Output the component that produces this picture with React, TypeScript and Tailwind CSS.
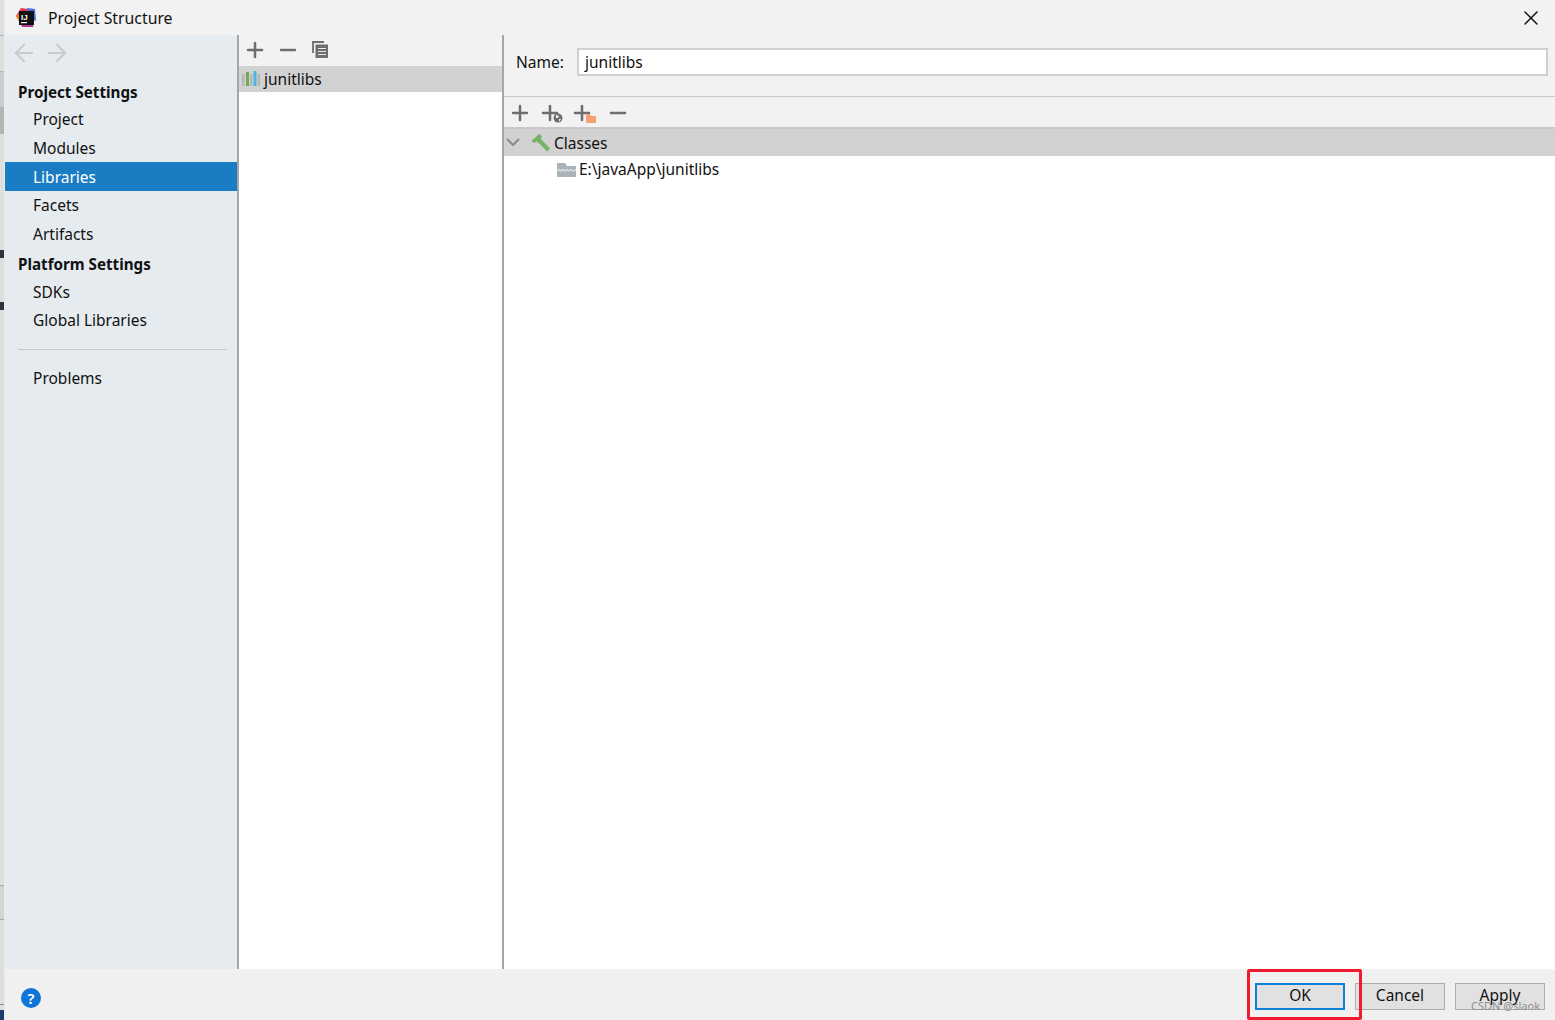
import { ArrowLeft, ArrowRight, Minus, Plus, X } from "lucide-react";

const font = { fontFamily: '"Noto Sans", "Open Sans", sans-serif' };

// what shows of the window behind the dialog, top to bottom
const behind = [
  "h-[35px] bg-[#dedede]",
  "h-px bg-[#b4b4b4]",
  "h-[35px] bg-[#dedede]",
  "h-px bg-[#b4b4b4]",
  "h-[35px] bg-[#c9ccd0]",
  "h-[27px] bg-[#b4b4b4]",
  "h-[116px] bg-[#dedede]",
  "h-[8px] bg-[#2b3440]",
  "h-[44px] bg-[#dedede]",
  "h-[8px] bg-[#2b3440]",
  "h-[575px] bg-[#dedede]",
  "h-px bg-[#a8a8a8]",
  "h-[33px] bg-[#d4d4d4]",
  "h-px bg-[#a8a8a8]",
  "h-[84px] bg-[#dedede]",
  "h-px bg-[#8c8c8c]",
  "h-[5px] bg-[#dedede]",
  "h-[10px] bg-[#1d3a6b]",
];

function IdeaLogo() {
  return (
    <svg width="20" height="19" viewBox="0 0 20 19">
      <path d="M0 8 L5 0 L12 1 L10 12 L3 13 Z" fill="#f0344c" />
      <path d="M0 8 L4 5 L8 16 L4 15 Z" fill="#f97a12" />
      <path d="M11 0 L19 1 L20 13 L12 8 Z" fill="#4b6ee8" />
      <path d="M4 14 L18 14 L17 19 L6 19 Z" fill="#b0369a" />
      <rect x="3" y="3" width="15" height="14" fill="#111" />
      <rect x="5" y="14" width="6" height="1.2" fill="#fff" />
      <text x="5" y="11.5" fontSize="8" fontWeight="700" fill="#fff" fontFamily='"Liberation Sans", sans-serif'>IJ</text>
    </svg>
  );
}

function CopyIcon() {
  return (
    <svg width="16" height="17" viewBox="0 0 16 17" fill="none">
      <path d="M1 12 V1 H12" stroke="#6e6e6e" strokeWidth="1.8" />
      <rect x="3.5" y="3.5" width="12.5" height="13.5" fill="#6e6e6e" />
      <path d="M6 7.5 H14 M6 10.5 H14 M6 13.5 H14" stroke="#e8e8e8" strokeWidth="1.2" />
    </svg>
  );
}

function LibraryBars() {
  return (
    <svg width="18" height="16" viewBox="0 0 18 16">
      <rect x="0" y="3" width="2.5" height="12" fill="#afb8bd" />
      <rect x="4" y="1" width="3" height="14" fill="#74ab4b" />
      <rect x="8" y="3" width="2.5" height="12" fill="#afb8bd" />
      <rect x="11.5" y="0" width="3" height="15" fill="#4db4dc" />
      <rect x="15.5" y="3" width="2.5" height="12" fill="#afb8bd" />
    </svg>
  );
}

function Hammer() {
  return (
    <svg width="20" height="20" viewBox="0 0 20 20">
      <path d="M0.5 8 L8 1 L11 3.5 L9.5 5.5 L11 7.5 L8 10.5 L6 8.5 L3 10 Z" fill="#75b266" />
      <path d="M6.5 8.5 L9.5 5.5 L19 15.5 L16 18.5 Z" fill="#75b266" />
    </svg>
  );
}

function JarFolder() {
  return (
    <svg width="19" height="14" viewBox="0 0 19 14">
      <path d="M0 0 H8 L10 3 H19 V14 H0 Z" fill="#aab3b9" />
      <path d="M0 8 L2 6.5 L4 8 L6 6.5 L8 8 L10 6.5 L12 8 L14 6.5 L16 8 L19 6.5" stroke="#e4e7e9" strokeWidth="1.2" fill="none" />
    </svg>
  );
}

function ToolPlus() {
  return <Plus size={24} strokeWidth={2.5} className="text-[#6e6e6e]" />;
}

function ToolMinus() {
  return <Minus size={24} strokeWidth={2.5} className="text-[#6e6e6e]" />;
}

function AddWithWeb() {
  return (
    <div className="relative h-6 w-[26px]">
      <ToolPlus />
      <svg width="10" height="10" viewBox="0 0 10 10" className="absolute top-[12px] left-[15px]">
        <circle cx="5" cy="5" r="4.5" fill="#6e6e6e" />
        <path d="M3 2 L6 3 L5 5 L3 5 Z M6 6 L8 6 L6 9 Z" fill="#f2f2f2" />
      </svg>
    </div>
  );
}

function AddWithFolder() {
  return (
    <div className="relative h-6 w-[26px]">
      <ToolPlus />
      <svg width="10" height="9" viewBox="0 0 10 9" className="absolute top-[13px] left-[16px]">
        <path d="M0 0 H4 L5 2 H10 V9 H0 Z" fill="#f4a073" />
      </svg>
    </div>
  );
}

function NavItem({ label, height, active }: { label: string; height: string; active?: boolean }) {
  return (
    <div className={`flex items-center pt-[2px] pl-7 ${height} ${active ? "bg-[#1a7dc4] text-white" : "text-[#111]"}`}>
      {label}
    </div>
  );
}

function FooterButton({ label, primary }: { label: string; primary?: boolean }) {
  return (
    <div
      className={`flex h-[27px] w-[90px] items-center justify-center bg-[#e1e1e1] pb-[2px] text-[#111] ${
        primary ? "border-2 border-[#0f80d8]" : "border border-[#adadad]"
      }`}
    >
      {label}
    </div>
  );
}

export default function App() {
  return (
    <div className="flex h-[1020px] w-[1555px] overflow-hidden bg-[#f2f2f2] text-[15.5px] text-[#111]" style={font}>
      <div className="flex w-[5px] shrink-0 flex-col border-r border-[#ececec]">
        {behind.map((cls, i) => (
          <div key={i} className={cls} />
        ))}
      </div>

      <div className="flex min-w-0 flex-1 flex-col">
        <div className="flex h-[35px] shrink-0 items-center pr-[12px] pl-[11px]">
          <IdeaLogo />
          <span className="mt-[2px] ml-[12px] text-[15.8px]">Project Structure</span>
          <X size={24} strokeWidth={1.5} className="ml-auto text-[#111]" />
        </div>

        <div className="flex min-h-0 flex-1">
          {/* sidebar */}
          <aside className="flex w-[232px] shrink-0 flex-col bg-[#e6ebf0]">
            <div className="flex h-[34px] items-center gap-[5px] pt-[1px] pl-[5px] text-[#c8cbce]">
              <ArrowLeft size={28} strokeWidth={1.8} />
              <ArrowRight size={28} strokeWidth={1.8} />
            </div>
            <div className="mt-[10px] flex h-[26px] items-center pl-[13px] text-[15.2px] font-bold">Project Settings</div>
            <NavItem label="Project" height="h-[28px]" />
            <NavItem label="Modules" height="h-[29px]" />
            <NavItem label="Libraries" height="h-[29px]" active />
            <NavItem label="Facets" height="h-[28px]" />
            <NavItem label="Artifacts" height="h-[30px]" />
            <div className="flex h-[29px] items-center pt-[2px] pl-[13px] text-[15.2px] font-bold">Platform Settings</div>
            <NavItem label="SDKs" height="h-[28px]" />
            <NavItem label="Global Libraries" height="h-[28px]" />
            <div className="mt-[15px] mr-[10px] ml-[13px] h-px bg-[#c4c8cc]" />
            <div className="mt-[14px]">
              <NavItem label="Problems" height="h-[28px]" />
            </div>
          </aside>
          <div className="w-[2px] shrink-0 bg-[#a6a6a6]" />

          {/* library list */}
          <div className="flex w-[263px] shrink-0 flex-col bg-white">
            <div className="flex h-[31px] items-center bg-[#f2f2f2] pb-[2px] pl-[4px]">
              <ToolPlus />
              <div className="ml-[9px]">
                <ToolMinus />
              </div>
              <div className="ml-[12px]">
                <CopyIcon />
              </div>
            </div>
            <div className="flex h-[26px] items-center gap-[4px] bg-[#d2d2d2] pl-[3px]">
              <LibraryBars />
              <span className="mt-[2px]">junitlibs</span>
            </div>
          </div>
          <div className="w-[2px] shrink-0 bg-[#a6a6a6]" />

          {/* library details */}
          <div className="flex min-w-0 flex-1 flex-col bg-white">
            <div className="flex h-[62px] shrink-0 items-center border-b border-[#c9c9c9] bg-[#f2f2f2] pr-[7px] pb-[7px] pl-[12px]">
              <span className="mt-[2px] w-[61px] shrink-0">Name:</span>
              <div className="flex h-[28px] flex-1 items-center border-2 border-[#cfcfcf] bg-white pt-[2px] pl-[6px]">junitlibs</div>
            </div>
            <div className="flex h-[32px] shrink-0 items-center border-b-2 border-[#c9c9c9] bg-[#f2f2f2] pt-[2px] pl-[4px]">
              <ToolPlus />
              <div className="ml-[6px]">
                <AddWithWeb />
              </div>
              <div className="ml-[6px]">
                <AddWithFolder />
              </div>
              <div className="ml-[10px]">
                <ToolMinus />
              </div>
            </div>
            <div className="flex h-[27px] shrink-0 items-center bg-[#d2d2d2] pl-[2px]">
              <svg width="14" height="8" viewBox="0 0 14 8" fill="none" className="-mt-[2px]">
                <path d="M1 1 L7 7 L13 1" stroke="#8a8a8a" strokeWidth="2" />
              </svg>
              <span className="ml-[11px]">
                <Hammer />
              </span>
              <span className="mt-[2px] ml-[3px]">Classes</span>
            </div>
            <div className="flex h-[27px] shrink-0 items-center pl-[53px]">
              <JarFolder />
              <span className="ml-[3px]">E:\javaApp\junitlibs</span>
            </div>
          </div>
        </div>

        {/* footer */}
        <div className="relative flex h-[51px] shrink-0 items-start bg-[#f0f0f0] pt-[14px] pr-[10px] pl-[16px]">
          <div className="mt-[5px] flex h-5 w-5 items-center justify-center rounded-full bg-[#0f74d6] text-[15px] font-semibold text-white">?</div>
          <div className="ml-auto flex gap-[10px]">
            <FooterButton label="OK" primary />
            <FooterButton label="Cancel" />
            <FooterButton label="Apply" />
          </div>
          {/* red annotation round the OK button */}
          <div className="absolute top-0 right-[193px] h-[51px] w-[115px] rounded-[2px] border-[3px] border-[#ee1c2e]" />
          <span className="absolute right-[15px] bottom-[6px] text-[11px] text-[#8f8f8f]">CSDN @slaok</span>
        </div>
      </div>
    </div>
  );
}
